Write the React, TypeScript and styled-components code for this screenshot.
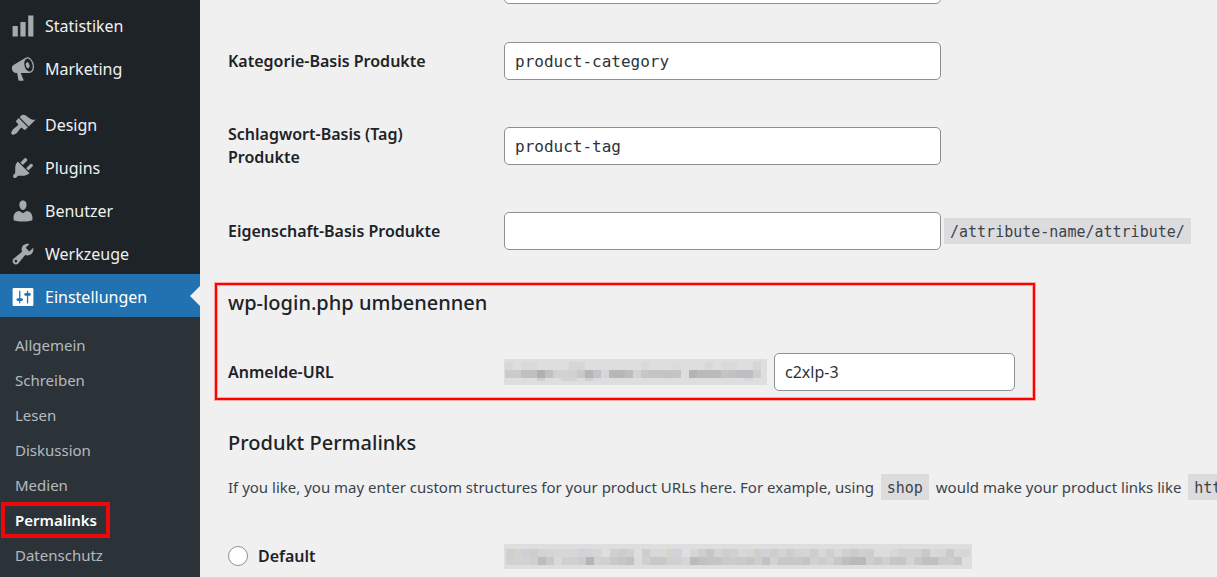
import React from "react";
import styled, { createGlobalStyle, css } from "styled-components";

const GlobalStyle = createGlobalStyle`
  *, *::before, *::after { box-sizing: border-box; }
  body {
    margin: 0;
    background: #f0f0f1;
    color: #3c434a;
    font-family: "Segoe UI", "Noto Sans", sans-serif;
    font-size: 15px;
    line-height: 24px;
    overflow: hidden;
  }
`;

const mono = `Consolas, "DejaVu Sans Mono", monospace`;

const Page = styled.div`
  display: flex;
  min-height: 100vh;
`;

const Sidebar = styled.nav`
  flex: 0 0 200px;
  padding-top: 3px;
  background: #1d2327;
  display: flex;
  flex-direction: column;
`;

const MenuGroup = styled.div`
  & + & { margin-top: 13px; }
`;

const MenuLink = styled.a<{ $current?: boolean }>`
  position: relative;
  display: flex;
  align-items: center;
  gap: 9px;
  height: 43px;
  padding: 2px 0 0 10px;
  color: ${(p) => (p.$current ? "#fff" : "#f0f0f1")};
  background: ${(p) => (p.$current ? "#2271b1" : "transparent")};
  font-size: 16px;
  text-decoration: none;

  svg {
    width: 26px;
    height: 26px;
    fill: ${(p) => (p.$current ? "#fff" : "#a7aaad")};
  }

  ${(p) =>
    p.$current &&
    css`
      &::after {
        content: "";
        position: absolute;
        right: 0;
        top: 50%;
        margin-top: -10px;
        border: 10px solid transparent;
        border-left-width: 0;
        border-right-color: #f0f0f1;
      }
    `}
`;

const SubMenu = styled.div`
  flex: 1;
  padding: 10px 0 5px;
  background: #2c3338;
`;

const SubLink = styled.a<{ $current?: boolean }>`
  position: relative;
  display: flex;
  align-items: center;
  width: fit-content;
  height: 35px;
  padding: 0 15px;
  color: ${(p) => (p.$current ? "#fff" : "rgba(240, 246, 252, 0.7)")};
  font-weight: ${(p) => (p.$current ? 600 : 400)};
  text-decoration: none;

  ${(p) =>
    p.$current &&
    css`
      &::after {
        content: "";
        position: absolute;
        inset: 1px 3px 0 2px;
        border: 2px solid #f00;
        box-shadow: 0 0 0 1px #da1218, inset 0 0 0 1px #da1218;
      }
    `}
`;

const Main = styled.main`
  flex: 1;
  min-width: 0;
  padding-left: 28px;
  overflow: hidden;
`;

const Rows = styled.div`
  display: grid;
  row-gap: 47px;
  margin-top: -43px;
`;

const Row = styled.div`
  display: grid;
  grid-template-columns: 276px 1fr;
  grid-template-rows: 38px;
  align-items: center;
`;

const RowLabel = styled.label`
  max-width: 225px;
  color: #1d2327;
  font-size: 16px;
  font-weight: 600;
  line-height: 23px;
`;

const Field = styled.div<{ $gap: number }>`
  display: flex;
  align-items: center;
  gap: ${(p) => p.$gap}px;
`;

const TextInput = styled.input<{ $width: number; $code?: boolean }>`
  width: ${(p) => p.$width}px;
  height: 38px;
  padding: 0 10px;
  border: 1px solid #8c8f94;
  border-radius: 5px;
  background: #fff;
  color: #2c3338;
  font-family: ${(p) => (p.$code ? mono : "inherit")};
  font-size: 16px;
`;

const ScrolledRow = styled(Row)`
  position: relative;
  top: 9px;
`;

const Code = styled.code`
  display: inline-block;
  height: 26px;
  margin: 0 3px;
  padding: 0 6px;
  background: #dcdcde;
  font-family: ${mono};
  font-size: 15px;
  line-height: 28px;
`;

const Masked = styled.div<{ $pad: string }>`
  padding: ${(p) => p.$pad};
  background: #dedede;

  svg { display: block; }
`;

const Callout = styled.section`
  width: 820px;
  height: 117px;
  margin: 33px 0 0 -13px;
  padding: 3px 0 0 11px;
  border: 2px solid #f00;
  box-shadow: 0 0 0 1px #f5a9a9, inset 0 0 0 1px #f5a9a9;
`;

const Title = styled.h2`
  margin: 0;
  color: #1d2327;
  font-size: 20px;
  font-weight: 500;
  line-height: 30px;
`;

const CalloutRow = styled(Row)`
  margin-top: 35px;
`;

const Section = styled.section`
  padding-top: 28px;
`;

const Intro = styled.p`
  margin: 16px 0 37px;
  line-height: 26px;
  white-space: nowrap;
`;

const RadioLabel = styled(RowLabel)`
  display: flex;
  align-items: center;
  gap: 10px;
`;

const Radio = styled.input`
  appearance: none;
  width: 20px;
  height: 20px;
  margin: 0;
  border: 1px solid #8c8f94;
  border-radius: 50%;
  background: #fff;
`;

const icons = {
  chart: "M18 18V2h-4v16h4zm-6 0V7H8v11h4zm-6 0v-8H2v8h4z",
  megaphone:
    "M18.15 5.94c.46 1.62.38 3.22-.02 4.48-.42 1.28-1.26 2.18-2.3 2.48-.16.06-.26.06-.4.06-.06.02-.12.02-.18.02-.06.02-.14.02-.22.02h-6.8l2.22 5.5c.02.14-.06.26-.14.34-.08.1-.24.16-.34.16H6.95c-.1 0-.26-.06-.34-.16-.08-.08-.16-.2-.14-.34l-1-5.5H4.25l-.02-.02c-.5.06-1.08-.18-1.54-.62s-.88-1.08-1.06-1.88c-.24-.8-.2-1.56-.02-2.2.18-.62.58-1.08 1.06-1.3l.02-.02 9-5.4c.1-.06.18-.1.24-.16.06-.04.14-.08.24-.12.16-.08.28-.12.5-.18 1.04-.3 2.24.1 3.22.98s1.84 2.24 2.26 3.86zm-2.58 5.98h-.02c.4-.1.74-.34 1.04-.7.58-.7.86-1.76.86-3.04 0-.64-.1-1.3-.28-1.98-.34-1.36-1.02-2.5-1.78-3.24s-1.68-1.1-2.46-.88c-.82.22-1.4.96-1.7 2-.32 1.04-.28 2.36.06 3.72.38 1.36 1 2.5 1.8 3.24.78.74 1.62 1.1 2.48.88zm-2.54-7.08c.22-.04.42-.02.62.04.38.16.76.48 1.02 1s.42 1.2.42 1.78c0 .3-.04.56-.12.8-.18.48-.44.84-.86.94-.34.1-.8-.06-1.14-.4s-.64-.86-.78-1.5c-.18-.62-.12-1.24.02-1.72s.48-.84.82-.94z",
  brush:
    "M14.48 11.06L7.41 3.99l1.5-1.5c.5-.56 2.3-.47 3.51.32 1.21.8 1.43 1.28 2.91 2.1 1.18.64 2.45 1.26 4.45.85zm-.71.71L6.7 4.7 4.93 6.47c-.39.39-.39 1.02 0 1.41l1.06 1.06c.39.39.39 1.03 0 1.42-.6.6-1.43 1.11-2.21 1.69-.35.26-.7.53-1.01.84C1.43 14.23.4 16.08 1.4 17.07c.99 1 2.84-.03 4.18-1.36.31-.31.58-.66.85-1.02.57-.78 1.08-1.61 1.69-2.21.39-.39 1.02-.39 1.41 0l1.06 1.06c.39.39 1.02.39 1.41 0z",
  plug:
    "M13.11 4.36L9.87 7.6 8 5.73l3.24-3.24c.35-.34 1.05-.2 1.56.32.52.51.66 1.21.31 1.55zm-8 1.77l.91-1.12 9.01 9.01-1.19.84c-.71.71-2.63 1.16-3.82 1.16H6.14L4.9 17.26c-.59.59-1.54.59-2.12 0-.59-.58-.59-1.53 0-2.12l1.24-1.24v-3.88c0-1.13.4-3.19 1.09-3.89zm7.26 3.97l3.24-3.24c.34-.35 1.04-.21 1.55.31.52.51.66 1.21.31 1.55l-3.24 3.25z",
  user:
    "M10 9.25c-2.27 0-2.73-3.44-2.73-3.44C7 4.02 7.82 2 9.97 2c2.16 0 2.98 2.02 2.71 3.81 0 0-.41 3.44-2.68 3.44zm0 2.57L12.72 10c2.39 0 4.52 2.33 4.52 4.53v2.49s-3.65 1.13-7.24 1.13c-3.65 0-7.24-1.13-7.24-1.13v-2.49c0-2.25 1.94-4.48 4.47-4.48z",
  wrench:
    "M16.68 9.77c-1.34 1.34-3.3 1.67-4.95.99l-5.41 6.52c-.99.99-2.59.99-3.58 0s-.99-2.59 0-3.57l6.52-5.42c-.68-1.65-.35-3.61.99-4.95 1.28-1.28 3.12-1.62 4.72-1.06l-2.89 2.89 2.82 2.82 2.86-2.87c.53 1.58.18 3.39-1.08 4.65zM3.81 16.21c.4.39 1.04.39 1.43 0 .4-.4.4-1.04 0-1.43-.39-.4-1.03-.4-1.43 0-.39.39-.39 1.03 0 1.43z",
  settings:
    "M18 16V4c0-.55-.45-1-1-1H3c-.55 0-1 .45-1 1v12c0 .55.45 1 1 1h14c.55 0 1-.45 1-1zM8 11h1c.55 0 1 .45 1 1s-.45 1-1 1H8v1.5c0 .28-.22.5-.5.5s-.5-.22-.5-.5V13H6c-.55 0-1-.45-1-1s.45-1 1-1h1V5.5c0-.28.22-.5.5-.5s.5.22.5.5V11zm5-2h-1c-.55 0-1-.45-1-1s.45-1 1-1h1V5.5c0-.28.22-.5.5-.5s.5.22.5.5V7h1c.55 0 1 .45 1 1s-.45 1-1 1h-1v5.5c0 .28-.22.5-.5.5s-.5-.22-.5-.5V9z",
};

type MenuEntry = { label: string; icon: keyof typeof icons; current?: boolean };

const menu: MenuEntry[][] = [
  [
    { label: "Statistiken", icon: "chart" },
    { label: "Marketing", icon: "megaphone" },
  ],
  [
    { label: "Design", icon: "brush" },
    { label: "Plugins", icon: "plug" },
    { label: "Benutzer", icon: "user" },
    { label: "Werkzeuge", icon: "wrench" },
    { label: "Einstellungen", icon: "settings", current: true },
  ],
];

const subMenu = ["Allgemein", "Schreiben", "Lesen", "Diskussion", "Medien", "Permalinks", "Datenschutz"];

/* Pixelated addresses: one colour per 8px block, "-" leaves the block empty. */
const loginMask = [
  "d8 - da da - - - - d6 d6 - - - - - - - da - - - db - - - d8 - da da - - d6",
  "cb cb c0 c0 b0b0b2 c0 d0d1d4 d2 d2 c8 b8b3b4 c0c4c9 d6 b7b7b8 b7 bd d2d3d8 c8c6c6 c4 c4 c2c3c5 c4 - b6b2b2 ba b9babc ba c6c4c2 c2 bcbec4 bcbec4 cd",
  "- - - - cf - - d4 d4 - d0cecf d8dade - - - - - - - - - - - - - - - - - - d8",
];

const defaultMask = [
  "cf d3d3d1 cdd0d6 ce d2d3d5 d5 d8d6d4 dad6d4 d6 d0d2d7 d4 d6 - d0 cc d0 - cd d8 d8 d8d2cc d0d3d8 dedfe1 d4d6d8 cf c6 d4 ce d0 d8 d6 cf cfd2d6 ce d4 cd d0d3d8 d4 cd d8 cf d8 d0 cb d0 ce dc dc d8 d2 d2 d2 c8 d8 d6 ca d8 d4d6da",
  "d0 d2 cfd2d6 cf bbbcc1 c8 da d0 d0 cc b5 d2 d2d0ce c8c9cd c6 c2 dc d0 c8 c8 d0 d0d1d5 d6 bbbbbf c0c1c5 c4 c4c5c8 ca cc ca c6 ce bdc3c7 d2 c8 c8 c8c8cc c4 d0 cc d2 c8 bebfc4 b9 b9 ccced0 c8 d0 c6 c6 d2d4d8 c6c8ce c0 c0 cc ce c8 -",
];

function Mosaic({ rows, height, title }: { rows: string[]; height: number; title: string }) {
  const cells = rows.map((row) => row.split(" "));
  return (
    <svg width={cells[0].length * 8} height={height} role="img" aria-label={title} shapeRendering="crispEdges">
      {cells.map((row, y) =>
        row.map((c, x) =>
          c === "-" ? null : (
            <rect key={`${x}-${y}`} x={x * 8} y={y * 8} width={8} height={8} fill={`#${c.length === 2 ? c.repeat(3) : c}`} />
          ),
        ),
      )}
    </svg>
  );
}

export default function App() {
  return (
    <>
      <GlobalStyle />
      <Page>
        <Sidebar>
          {menu.map((group, i) => (
            <MenuGroup key={i}>
              {group.map((entry) => (
                <MenuLink key={entry.label} href="#" $current={entry.current}>
                  <svg viewBox="0 0 20 20" aria-hidden="true">
                    <path d={icons[entry.icon]} />
                  </svg>
                  {entry.label}
                </MenuLink>
              ))}
            </MenuGroup>
          ))}
          <SubMenu>
            {subMenu.map((label) => (
              <SubLink key={label} href="#" $current={label === "Permalinks"}>
                {label}
              </SubLink>
            ))}
          </SubMenu>
        </Sidebar>
        <Main>
          <Rows>
            <ScrolledRow>
              <span />
              <Field $gap={4}>
                <TextInput $width={437} $code aria-label="Produkt-Basis" />
              </Field>
            </ScrolledRow>
            <Row>
              <RowLabel htmlFor="category">Kategorie-Basis Produkte</RowLabel>
              <Field $gap={4}>
                <TextInput id="category" $width={437} $code defaultValue="product-category" />
              </Field>
            </Row>
            <Row>
              <RowLabel htmlFor="tag">Schlagwort-Basis (Tag) Produkte</RowLabel>
              <Field $gap={4}>
                <TextInput id="tag" $width={437} $code defaultValue="product-tag" />
              </Field>
            </Row>
            <Row>
              <RowLabel htmlFor="attribute">Eigenschaft-Basis Produkte</RowLabel>
              <Field $gap={0}>
                <TextInput id="attribute" $width={437} $code />
                <Code>/attribute-name/attribute/</Code>
              </Field>
            </Row>
          </Rows>
          <Callout>
            <Title>wp-login.php umbenennen</Title>
            <CalloutRow>
              <RowLabel htmlFor="login">Anmelde-URL</RowLabel>
              <Field $gap={7}>
                <Masked $pad="3px 6px 4px 1px">
                  <Mosaic rows={loginMask} height={19} title="Adresse" />
                </Masked>
                <TextInput id="login" $width={241} defaultValue="c2xlp-3" />
              </Field>
            </CalloutRow>
          </Callout>
          <Section>
            <Title>Produkt Permalinks</Title>
            <Intro>
              If you like, you may enter custom structures for your product URLs here. For example, using{" "}
              <Code>shop</Code> would make your product links like <Code>https</Code>
            </Intro>
            <Row>
              <RadioLabel>
                <Radio type="radio" name="structure" />
                Default
              </RadioLabel>
              <Field $gap={4}>
                <Masked $pad="5px 2px 4px">
                  <Mosaic rows={defaultMask} height={16} title="Adresse" />
                </Masked>
              </Field>
            </Row>
          </Section>
        </Main>
      </Page>
    </>
  );
}
